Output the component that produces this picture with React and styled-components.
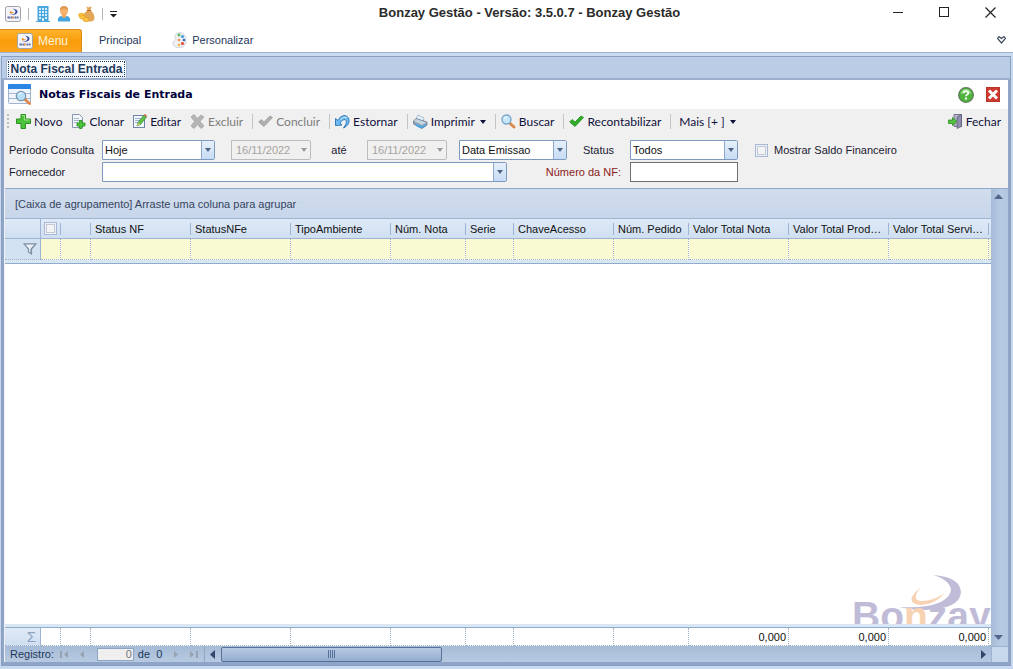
import styled, { createGlobalStyle, css } from "styled-components";

const GlobalStyle = createGlobalStyle`
  * {
    box-sizing: border-box;
  }
  body {
    margin: 0;
    font-family: "Liberation Sans", Arial, sans-serif;
    font-size: 11px;
    color: #1a1a33;
    overflow: hidden;
  }
  button, input, select {
    font: inherit;
    color: inherit;
    margin: 0;
  }
  button {
    padding: 0;
    border: 0;
    background: none;
  }
  svg {
    display: block;
    flex: none;
  }
`;

const Page = styled.div`
  height: 100vh;
  min-height: 400px;
  display: flex;
  flex-direction: column;
  background: #c9d9ef;
`;

const TitleBar = styled.header`
  height: 29px;
  flex: none;
  display: flex;
  align-items: center;
  background: #ffffff;
`;

const QuickAccess = styled.div`
  display: flex;
  align-items: center;
  gap: 7px;
  padding: 0 0 2px 5px;
  width: 184px;
`;

const QuickDivider = styled.span`
  width: 1px;
  height: 12px;
  background: #b4b4b4;
`;

const WindowTitle = styled.h1`
  flex: 1;
  margin: 0;
  padding-bottom: 3px;
  font-size: 13px;
  line-height: 16px;
  font-weight: bold;
  text-align: center;
  color: #2b2b2b;
`;

const WindowButton = styled.button`
  width: 46px;
  height: 29px;
  padding-bottom: 5px;
  display: flex;
  align-items: center;
  justify-content: center;
`;

const Ribbon = styled.nav`
  height: 24px;
  flex: none;
  display: flex;
  align-items: stretch;
  background: #ffffff;
  border-bottom: 1px solid #9fb1cb;
`;

const RibbonTab = styled.button`
  display: flex;
  align-items: center;
  gap: 5px;
  padding: 0 14px 1px 17px;
  color: #1e395b;

  ${({ $menu }) =>
    $menu &&
    css`
      width: 82px;
      padding: 0 0 0 17px;
      color: #fff6dc;
      font-size: 12px;
      border: 1px solid #d98a1b;
      border-left: 0;
      border-bottom: 0;
      border-radius: 0 3px 0 0;
      background: linear-gradient(#fdb32b, #f99d0c 50%, #fba41a);
    `}
`;

const RibbonSpacer = styled.span`
  flex: 1;
`;

const RibbonToggle = styled.button`
  padding: 0 7px 2px 0;
`;

const Frame = styled.main`
  flex: 1;
  min-height: 0;
  margin: 3px 2px 3px 1px;
  display: flex;
  flex-direction: column;
  border: 1px solid #8a9fc1;
`;

const TabStrip = styled.div`
  height: 23px;
  flex: none;
  padding: 2px 0 0 4px;
  background: #bbcce6;
  border-bottom: 2px solid #9cb0cd;
`;

const DocumentTab = styled.button`
  width: 121px;
  height: 19px;
  padding: 1px;
  background: linear-gradient(#ffffff, #edf3fb);
  border: 1px solid #a5b8d4;
  border-radius: 3px 3px 0 0;
  border-bottom: 0;
  color: #1e395b;
  font-size: 12px;
  line-height: 14px;
  font-weight: bold;
  white-space: nowrap;

  span {
    display: block;
    border: 1px dotted #1e395b;
  }
`;

const Document = styled.section`
  flex: 1;
  min-height: 0;
  display: flex;
  flex-direction: column;
  background: #f0f0f0;
  border: solid #8fa5c8;
  border-width: 0 2px 3px;
`;

const FormHeader = styled.div`
  height: 29px;
  flex: none;
  display: flex;
  align-items: center;
  gap: 7px;
  padding: 0 8px 0 4px;
  background: #ffffff;
`;

const FormTitle = styled.h2`
  flex: 1;
  margin: 0;
  font-family: "DejaVu Sans", Verdana, sans-serif;
  font-size: 11px;
  color: #00003c;
`;

const HeaderButtons = styled.div`
  display: flex;
  align-items: center;
  gap: 12px;
`;

const Toolbar = styled.div`
  height: 25px;
  flex: none;
  display: flex;
  align-items: center;
  padding: 0 2px 0 3px;
  font-family: Lato, "Segoe UI", sans-serif;
  font-size: 12px;
`;

const Grip = styled.span`
  width: 2px;
  height: 16px;
  margin-right: 3px;
  background: repeating-linear-gradient(#bdbdbd 0 2px, #f0f0f0 2px 4px);
`;

const ToolButton = styled.button`
  display: flex;
  align-items: center;
  gap: 3px;
  padding: 0 5px 0 ${({ $textOnly }) => ($textOnly ? "7px" : "4px")};
  line-height: 18px;
  color: #10103c;
  white-space: nowrap;
  margin-left: ${({ $end }) => ($end ? "auto" : "0")};

  &:disabled {
    color: #7d7d7d;
  }
`;

const MenuArrow = styled.span`
  padding-left: 2px;
`;

const ToolDivider = styled.span`
  width: 1px;
  height: 15px;
  margin: 0 1px 0 4px;
  background: #c4c4c4;
`;

const Filters = styled.form`
  flex: none;
  padding: 6px 0 6px 5px;
  display: flex;
  flex-direction: column;
  gap: 2px;
`;

const FilterRow = styled.div`
  display: flex;
  align-items: center;
  height: 20px;
`;

const FieldLabel = styled.label`
  width: ${({ $width }) => $width}px;
  padding-right: ${({ $end }) => ($end ? "9px" : "0")};
  text-align: ${({ $end, $center }) =>
    $end ? "right" : $center ? "center" : "left"};
  color: ${({ $required }) => ($required ? "#8b1a1a" : "#1a1a33")};
  font-size: 11px;
`;

const SelectBox = styled.div`
  width: ${({ $width }) => $width}px;
  height: 20px;
  margin-right: ${({ $gap }) => $gap || 0}px;
  display: grid;
  align-items: stretch;
  border: 1px solid #7f9ac0;
  border-radius: 0 2px 2px 0;
  background: #ffffff;

  select {
    grid-area: 1 / 1;
    width: 100%;
    padding: 0 20px 0 2px;
    appearance: none;
    border: 0;
    background: transparent;
    color: #111111;
  }

  ${({ $muted }) =>
    $muted &&
    css`
      background: #f0f0f0;
      border-color: #bcbcbc;

      select {
        padding-left: 4px;
        color: #a6a39d;
        opacity: 1;
      }
    `}
`;

const SelectArrow = styled.span`
  grid-area: 1 / 1;
  justify-self: end;
  width: 13px;
  display: flex;
  align-items: center;
  justify-content: center;
  pointer-events: none;
  color: ${({ $muted }) => ($muted ? "#9a9a9a" : "#4e6485")};
  background: ${({ $muted }) =>
    $muted ? "transparent" : "linear-gradient(#e6f0fb, #c6dbf3)"};
  border-left: ${({ $muted }) => ($muted ? "0" : "1px solid #8fa9ce")};
`;

const NumberInput = styled.input`
  width: 108px;
  height: 20px;
  padding: 0 3px;
  border: 1px solid #6e6e6e;
  border-radius: 0;
  background: #ffffff;
`;

const CheckLabel = styled.label`
  display: flex;
  align-items: center;
  gap: 6px;
  margin-left: 17px;
`;

const Check = styled.input.attrs({ type: "checkbox" })`
  appearance: none;
  display: block;
  width: 13px;
  height: 13px;
  border: 1px solid #a9b9d3;
  background: #f4f4f4;
  box-shadow: inset 0 0 0 1px #eef2f8, inset 0 0 0 2px #c3cad6;
`;

const GridPanel = styled.div`
  flex: 1;
  min-height: 0;
  margin-left: 1px;
  display: flex;
  flex-direction: column;
  border-top: 1px solid #8fa9cc;
  background: #ffffff;
`;

const GridTop = styled.div`
  flex: 1;
  min-height: 0;
  display: flex;
`;

const GridMain = styled.div`
  flex: 1;
  min-width: 0;
  display: flex;
  flex-direction: column;
  overflow: hidden;
`;

const GroupBox = styled.div`
  height: 30px;
  flex: none;
  padding-left: 10px;
  line-height: 30px;
  color: #35445f;
  background: linear-gradient(#d1dded, #c8d6ea);
  border-bottom: 1px solid #9fb4d2;
`;

const TableArea = styled.div`
  flex: 1;
  min-height: 0;
  overflow: hidden;
`;

const DataTable = styled.table`
  width: 100%;
  height: 100%;
  table-layout: fixed;
  border-collapse: separate;
  border-spacing: 0;
`;

const HeaderRow = styled.tr`
  height: 20px;

  th {
    padding: 0 4px;
    height: 20px;
    font-weight: normal;
    text-align: left;
    white-space: nowrap;
    overflow: hidden;
    text-overflow: ellipsis;
    color: #111111;
    border-bottom: 1px solid #9fb4d2;
    background: linear-gradient(#9fb4d2, #9fb4d2) right 0 top 4px / 1px 12px
        no-repeat,
      linear-gradient(#dfeaf7, #cfdff1);
  }

  th:first-child {
    background: linear-gradient(#dfeaf7, #cfdff1);
    border-right: 1px solid #9fb4d2;
  }

  th:nth-child(2) {
    padding: 0 0 0 3px;
  }

  th:last-child {
    background: linear-gradient(#dfeaf7, #cfdff1);
  }
`;

const FilterCells = styled.tr`
  height: 21px;

  td {
    height: 21px;
    padding: 0;
    background: #f9f9d2;
    border-right: 1px dotted #9fb4c8;
    border-bottom: 1px dotted #9fb4c8;
    background-clip: padding-box;
  }

  td:first-child {
    padding-left: 18px;
    background: #d3e2f3;
    border-right: 1px solid #9fb4d2;
  }

  td:last-child {
    border-right: 0;
  }
`;

const BandRow = styled.tr`
  height: 4px;

  td {
    height: 4px;
    padding: 0;
    background: #d9e6f4;
    border-bottom: 1px solid #93abca;
  }
`;

const EmptyBody = styled.td`
  padding: 0;
  vertical-align: bottom;
  background: #ffffff;

  svg {
    margin-left: auto;
  }
`;

const TotalsRow = styled.tr`
  height: 18px;

  td {
    height: 18px;
    padding: 0 2px 0 0;
    text-align: right;
    color: #111111;
    background: #ffffff;
    border-right: 1px dotted #9fb4c8;
    border-bottom: 1px dotted #9fb4c8;
  }

  td:first-child {
    font-size: 15px;
    line-height: 15px;
    padding-right: 4px;
    color: #8fa3c0;
    background: linear-gradient(#dfeaf7, #cfdff1);
    border-right: 1px solid #9fb4d2;
  }

  td:last-child {
    border-right: 0;
  }
`;

const VerticalBar = styled.div`
  width: 17px;
  flex: none;
  display: flex;
  flex-direction: column;
  justify-content: space-between;
  align-items: center;
  padding: 5px 2px 6px 0;
  color: #52658a;
  background: linear-gradient(90deg, #a6bbd8, #b8cbe4 60%, #b3c7e1);
`;

const GridBottom = styled.div`
  height: 16px;
  flex: none;
  display: flex;
  background: linear-gradient(#a5bbd6, #b8cae2);
`;

const Navigator = styled.div`
  width: 200px;
  flex: none;
  display: flex;
  align-items: center;
  padding-left: 5px;
  border-right: 1px solid #8fa5c4;
  color: #1e395b;

  label {
    width: 45px;
  }
`;

const NavButton = styled.button`
  width: 20px;
  display: flex;
  justify-content: center;
  color: #98a3b2;
`;

const RecordInput = styled.input`
  width: 37px;
  height: 13px;
  padding: 0 1px;
  text-align: right;
  color: #777777;
  background: #efefef;
  border: 1px solid #8fa5c4;
  margin: 0 4px 0 5px;
`;

const RecordCount = styled.span`
  width: 30px;
  white-space: pre;
`;

const HorizontalBar = styled.div`
  flex: 1;
  display: flex;
  align-items: center;
  padding: 0 5px;
  color: #33456b;
`;

const HorizontalThumb = styled.div`
  width: 221px;
  height: 15px;
  margin: 0 auto 0 6px;
  display: flex;
  align-items: center;
  justify-content: center;
  border: 1px solid #58719a;
  border-radius: 2px;
  background: linear-gradient(#b7cae5, #94adcd);
`;

const Corner = styled.div`
  width: 17px;
  border: solid #9fb4d2;
  border-width: 1px 0 0 1px;
  background: #c8d8ec;
`;

/* icons */

const AppIcon = () => (
  <svg width="16" height="16" viewBox="0 0 16 16">
    <rect x="0.5" y="0.5" width="15" height="15" rx="2" fill="#f3f4f8" stroke="#a2a2ab" />
    <path d="M7 2.500q6 .500 5.500 3.500Q12 9.500 4 9q6-.500 6.500-3Q10.500 3.500 7 2.500z" fill="#34469a" />
    <path d="M6 4.500q-2.500 2.500-.500 3 2 .300 4-1.200-3.500.700-3.500-1.800z" fill="#ef8a2c" />
    <path d="M2.500 11.500h3m.500 0h1.500m2 0H11m.500 0h2" stroke="#6470aa" strokeWidth="2" />
    <path d="M7 11.500h2" stroke="#e19a5c" strokeWidth="2" />
  </svg>
);

const BuildingIcon = () => (
  <svg width="14" height="16" viewBox="0 0 14 16">
    <path d="M1.500 0h11v15H14v1H0v-1h1.500z" fill="#4ba6dd" />
    <path
      d="M3 2h2v2H3zm3 0h2v2H6zm3 0h2v2H9zM3 5h2v2H3zm3 0h2v2H6zm3 0h2v2H9zM3 8h2v2H3zm3 0h2v2H6zm3 0h2v2H9zM3 11h2v2H3zm6 0h2v2H9zM6 12h2v3H6z"
      fill="#d3efff"
    />
  </svg>
);

const UserIcon = () => (
  <svg width="14" height="16" viewBox="0 0 14 16">
    <path d="M1 15.500Q0 11 4 10l3 1 3-1q4 1 3 5.500z" fill="#43a5e0" />
    <path d="M5 8h4v3q-2 2-4 0z" fill="#eda45c" />
    <ellipse cx="7" cy="5" rx="4" ry="4.700" fill="#f6b26e" />
    <path d="M3 5Q2.500 0 7 0t4 5Q9.500 2.500 7 2.500T3 5z" fill="#e09a50" />
  </svg>
);

const MoneyIcon = () => (
  <svg width="17" height="16" viewBox="0 0 17 16">
    <path d="M9.500 4L8.500.500l2 1 2-1.300 1 1.300L12.500 4q4 4 4 8-.500 3.500-4 3.500H7q-3-1-2-5.500 1-3 4.500-6z" fill="#e3a557" />
    <path d="M9 4.500h4" stroke="#aa6e2e" />
    <g fill="#ffc744" stroke="#dc9b20" strokeWidth=".7">
      <ellipse cx="3.500" cy="9" rx="3" ry="1.700" />
      <ellipse cx="4.500" cy="11.300" rx="3" ry="1.700" />
      <ellipse cx="8" cy="13.500" rx="3" ry="2" />
    </g>
  </svg>
);

const CustomizeMenuIcon = () => (
  <svg width="7" height="8" viewBox="0 0 7 8">
    <path d="M0 1.500h7" stroke="#222" />
    <path d="M0 4h7L3.500 7.500z" fill="#222" />
  </svg>
);

const PaletteIcon = () => (
  <svg width="15" height="16" viewBox="0 0 15 16">
    <path
      d="M8 .500q6 1 6 8 0 6-5 7-6 1-8-3-1-3 2-4 2-1 0-3-1-4 5-5z"
      fill="#eef0f4"
      stroke="#d3d6dd"
    />
    <circle cx="7" cy="3" r="1.400" fill="#57b957" />
    <circle cx="10.500" cy="4.500" r="1.500" fill="#3d9ad9" />
    <circle cx="12" cy="8" r="1.300" fill="#3366bb" />
    <circle cx="10.500" cy="11.500" r="1.600" fill="#e24c3a" />
    <circle cx="7" cy="13" r="1.300" fill="#f0b83a" />
    <circle cx="7" cy="8" r="1.300" fill="#e5985a" />
  </svg>
);

const MinimizeIcon = () => (
  <svg width="10" height="10" viewBox="0 0 10 10">
    <path d="M0 5.500h10" stroke="#222" />
  </svg>
);

const MaximizeIcon = () => (
  <svg width="10" height="10" viewBox="0 0 10 10">
    <rect x="0.500" y="0.500" width="9" height="9" fill="none" stroke="#222" />
  </svg>
);

const CloseIcon = () => (
  <svg width="11" height="11" viewBox="0 0 11 11">
    <path d="M.500.500l10 10m0-10l-10 10" stroke="#222" strokeWidth="1.200" />
  </svg>
);

const ExpandIcon = () => (
  <svg width="9" height="8" viewBox="0 0 9 8">
    <path
      d="M.500 2.500l1.500-2 2.500 2 2.500-2 1.500 2-4 4.500z"
      fill="none"
      stroke="#3d4a5e"
      strokeWidth="1.200"
    />
  </svg>
);

const FormIcon = () => (
  <svg width="24" height="22" viewBox="0 0 24 22">
    <rect x="0.500" y="0.500" width="22" height="19" rx="1" fill="#f1f5fb" stroke="#9fb3cf" />
    <path d="M0 1q0-1 1-1h21q1 0 1 1v4H0z" fill="#2a86e2" />
    <path d="M1 9.500h21M1 14.500h21" stroke="#a9b8d0" />
    <path d="M16.500 15l5 4.500" stroke="#e08a4e" strokeWidth="3" strokeLinecap="round" />
    <circle cx="13" cy="12" r="4.700" fill="#b5e0f7" stroke="#7893ad" strokeWidth="1.200" />
    <path d="M10.500 11q1-2.500 3.500-2" stroke="#fff" fill="none" />
  </svg>
);

const HelpIcon = () => (
  <svg width="16" height="16" viewBox="0 0 16 16">
    <circle cx="8" cy="8" r="7.300" fill="#4fb53c" stroke="#5c7a58" strokeWidth="1.300" />
    <path d="M2.500 7q1-5 5.500-5t5.500 5q-5-2-11 0z" fill="#8bd97b" />
    <path d="M5.700 6.200q0-2.200 2.300-2.200t2.300 2q0 1.200-1.300 1.800-1 .500-1 1.500" stroke="#fff" strokeWidth="1.700" fill="none" />
    <rect x="7" y="10.500" width="2" height="2" fill="#fff" />
  </svg>
);

const FormCloseIcon = () => (
  <svg width="14" height="15" viewBox="0 0 14 15">
    <rect x="0.500" y="0.500" width="13" height="14" fill="#d0392e" stroke="#b5342c" />
    <path d="M3 3.500l8 8m0-8l-8 8" stroke="#fff" strokeWidth="3" />
  </svg>
);

const PlusIcon = () => (
  <svg width="15" height="15" viewBox="0 0 15 15">
    <path d="M5 .500h4.500v4.500H14.500v4.500H9.500v5H5v-5H.500V5H5z" fill="#4cc43a" stroke="#2d8f22" />
    <path d="M6 1.500h2.500V6H13.500" fill="none" stroke="#9be58e" />
  </svg>
);

const CloneIcon = () => (
  <svg width="15" height="15" viewBox="0 0 15 15">
    <path d="M1.500.500h7l3 3v10h-10z" fill="#f3f6fa" stroke="#8795ad" />
    <path d="M3 4.500h5M3 6.500h6M3 8.500h4" stroke="#a5b4c9" />
    <path d="M8.500 6.500h2.500v2.500h3V12h-3v2.500H8.500V12H6V9h2.500z" fill="#4cc43a" stroke="#238a1a" strokeWidth=".8" />
  </svg>
);

const EditIcon = () => (
  <svg width="14" height="15" viewBox="0 0 14 15">
    <rect x="0.500" y="1.500" width="11" height="12" fill="#f5f8fc" stroke="#6f86aa" />
    <path d="M2 4.500h6M2 6.500h5M2 8.500h3" stroke="#9fb4d2" />
    <path d="M4 12l1-3.500L11 1l2.500 2-6 7.500z" fill="#5fc24b" stroke="#34862a" strokeWidth=".7" />
    <path d="M11 1l1-1 2 2-1 1z" fill="#e0564a" />
    <path d="M4 12l1-3 2 1.500z" fill="#f0cf92" />
  </svg>
);

const DeleteIcon = () => (
  <svg width="15" height="15" viewBox="0 0 15 15">
    <path d="M1 3l3-2.500 3.500 4L11 1l3 2-4 4.500 4 4.500-3 2.500-3.500-4L4 14.500 1 12l3.500-4.500z" fill="#b5b5b5" stroke="#9d9d9d" strokeWidth=".7" />
  </svg>
);

const CheckIcon = ({ color, edge }) => (
  <svg width="15" height="15" viewBox="0 0 15 15">
    <path d="M.700 8l2.500-2.500L6 8 12 2l2.500 1.500L6 12.500z" fill={color} stroke={edge} strokeWidth=".8" />
  </svg>
);

const UndoIcon = () => (
  <svg width="15" height="15" viewBox="0 0 15 15">
    <path d="M.500 4.500v7l6.500-.500-2-2q2-4 5-3.500 3.500 2-1.500 8.500 6-3 5.500-8Q13 1.500 9 1.500 5 2 3 6.500z" fill="#6dbcf2" stroke="#256fb5" strokeWidth=".9" />
    <path d="M5.500 5.500q3-3.500 6.500-2" stroke="#d3ecfc" fill="none" />
  </svg>
);

const PrintIcon = () => (
  <svg width="15" height="15" viewBox="0 0 15 15">
    <path d="M3 5l2-4 6 3-1 4z" fill="#e3f2fc" stroke="#91a5b7" strokeWidth=".7" />
    <path d="M.500 7L3 4.500 14 8v3l-5 3.500L.500 10z" fill="#8da3b8" stroke="#5d7183" strokeWidth=".7" />
    <path d="M1 7l2-2 10.500 3.500L9 11z" fill="#c6d4e0" />
    <path d="M3 10l6 2.500 3-2 1 1.500-5 2.500-5-2.500z" fill="#45a8e5" />
  </svg>
);

const SearchIcon = () => (
  <svg width="15" height="15" viewBox="0 0 15 15">
    <path d="M8.500 9l4.500 4" stroke="#d98948" strokeWidth="3" strokeLinecap="round" />
    <circle cx="5.500" cy="5.500" r="4.500" fill="#c6e8fb" stroke="#7aa6cc" strokeWidth="1.400" />
    <path d="M3 5q.500-2 3-2.200" stroke="#fff" fill="none" />
  </svg>
);

const ExitIcon = () => (
  <svg width="15" height="15" viewBox="0 0 15 15">
    <path d="M6 .500h7.500v12H6z" fill="#b9b8cc" stroke="#76758f" />
    <path d="M9 3l4.500-2.500v12L9 14.500z" fill="#8d8caa" stroke="#5c5b78" strokeWidth=".7" />
    <path d="M.500 6h4V3.500L9 7.500l-4.500 4V9.500h-4z" fill="#54c243" stroke="#2c8a20" strokeWidth=".8" />
  </svg>
);

const FunnelIcon = () => (
  <svg width="14" height="12" viewBox="0 0 14 12">
    <path d="M1 .800h12L8.500 6v5L5.500 9V6z" fill="#e8eff8" stroke="#7f8ea4" strokeWidth="1.200" />
    <path d="M12 1.500L8 6v4" stroke="#7f8ea4" fill="none" />
  </svg>
);

const TRIANGLES = {
  down: "M0 0h10L5 6z",
  up: "M0 6h10L5 0z",
  left: "M10 0v6L0 3z",
  right: "M0 0v6l10-3z",
};

const Triangle = ({ dir = "down", width = 6, height = 4 }) => (
  <svg width={width} height={height} viewBox="0 0 10 6" preserveAspectRatio="none">
    <path d={TRIANGLES[dir]} fill="currentColor" />
  </svg>
);

const EndIcon = ({ last }) => (
  <svg width="9" height="7" viewBox="0 0 9 7">
    <path
      d={last ? "M0 0v7l4-3.500zM6 0h2v7H6z" : "M9 0v7L5 3.500zM1 0h2v7H1z"}
      fill="currentColor"
    />
  </svg>
);

const ThumbGrip = () => (
  <svg width="8" height="8" viewBox="0 0 8 8">
    <path d="M.500 0v8m2-8v8m2-8v8m2-8v8" stroke="#58719a" />
  </svg>
);

const Watermark = () => (
  <svg width="138" height="50" viewBox="0 0 138 50">
    <path d="M80 1Q107 3 108 18 107 35 72 36 58 36 46 33 62 34 74 32 96 28 98 16 97 6 80 1z" fill="#c0bcd8" />
    <path d="M68 13Q58 25 67 27 78 28 92 19 80 32 66 31 50 28 68 13z" fill="#f8d3b3" />
    <text x="-1" y="55" fontFamily="Liberation Sans, Arial, sans-serif" fontSize="39" fontWeight="bold" fill="#c0bcd8">
      Bo<tspan fill="#f8d3b3">n</tspan>zay
    </text>
  </svg>
);

const columns = [
  { width: 36 },
  { width: 20, check: true },
  { width: 30 },
  { width: 100, label: "Status NF" },
  { width: 100, label: "StatusNFe" },
  { width: 100, label: "TipoAmbiente" },
  { width: 75, label: "Núm. Nota" },
  { width: 48, label: "Serie" },
  { width: 100, label: "ChaveAcesso" },
  { width: 75, label: "Núm. Pedido" },
  { width: 100, label: "Valor Total Nota", total: "0,000" },
  { width: 100, label: "Valor Total Produtos", total: "0,000" },
  { width: 100, label: "Valor Total Serviços", total: "0,000" },
  {},
];

const Select = ({ id, width, gap, value, muted, label }) => (
  <SelectBox $width={width} $gap={gap} $muted={muted}>
    <select id={id} disabled={muted} aria-label={label}>
      <option>{value}</option>
    </select>
    <SelectArrow $muted={muted}>
      <Triangle width={6} height={4} />
    </SelectArrow>
  </SelectBox>
);

const InvoiceGrid = () => (
  <GridPanel>
    <GridTop>
      <GridMain>
        <GroupBox>[Caixa de agrupamento] Arraste uma coluna para agrupar</GroupBox>
        <TableArea>
          <DataTable>
            <colgroup>
              {columns.map((col, i) => (
                <col key={i} width={col.width} />
              ))}
            </colgroup>
            <thead>
              <HeaderRow>
                {columns.map((col, i) => (
                  <th key={i}>
                    {col.check ? <Check aria-label="Selecionar todos" /> : col.label}
                  </th>
                ))}
              </HeaderRow>
              <FilterCells>
                {columns.map((col, i) => (
                  <td key={i}>{i === 0 && <FunnelIcon />}</td>
                ))}
              </FilterCells>
              <BandRow>
                <td colSpan={columns.length} />
              </BandRow>
            </thead>
            <tbody>
              <tr>
                <EmptyBody colSpan={columns.length}>
                  <Watermark />
                </EmptyBody>
              </tr>
            </tbody>
            <tfoot>
              <BandRow>
                <td colSpan={columns.length} />
              </BandRow>
              <TotalsRow>
                {columns.map((col, i) => (
                  <td key={i}>{i === 0 ? "Σ" : col.total}</td>
                ))}
              </TotalsRow>
            </tfoot>
          </DataTable>
        </TableArea>
      </GridMain>
      <VerticalBar>
        <Triangle dir="up" width={9} height={5} />
        <Triangle width={9} height={5} />
      </VerticalBar>
    </GridTop>
    <GridBottom>
      <Navigator>
        <label htmlFor="record">Registro:</label>
        <NavButton aria-label="Primeiro">
          <EndIcon />
        </NavButton>
        <NavButton aria-label="Anterior">
          <Triangle dir="left" width={4} height={7} />
        </NavButton>
        <RecordInput id="record" defaultValue="0" />
        <RecordCount>{"de  0"}</RecordCount>
        <NavButton aria-label="Próximo">
          <Triangle dir="right" width={4} height={7} />
        </NavButton>
        <NavButton aria-label="Último">
          <EndIcon last />
        </NavButton>
      </Navigator>
      <HorizontalBar>
        <Triangle dir="left" width={5} height={9} />
        <HorizontalThumb>
          <ThumbGrip />
        </HorizontalThumb>
        <Triangle dir="right" width={5} height={9} />
      </HorizontalBar>
      <Corner />
    </GridBottom>
  </GridPanel>
);

const App = () => {
  return (
    <Page>
      <GlobalStyle />
      <TitleBar>
        <QuickAccess>
          <AppIcon />
          <QuickDivider />
          <BuildingIcon />
          <UserIcon />
          <MoneyIcon />
          <QuickDivider />
          <CustomizeMenuIcon />
        </QuickAccess>
        <WindowTitle>Bonzay Gestão - Versão: 3.5.0.7 - Bonzay Gestão</WindowTitle>
        <WindowButton aria-label="Minimizar">
          <MinimizeIcon />
        </WindowButton>
        <WindowButton aria-label="Maximizar">
          <MaximizeIcon />
        </WindowButton>
        <WindowButton aria-label="Fechar janela">
          <CloseIcon />
        </WindowButton>
      </TitleBar>
      <Ribbon>
        <RibbonTab $menu>
          <AppIcon />
          Menu
        </RibbonTab>
        <RibbonTab>Principal</RibbonTab>
        <RibbonTab>
          <PaletteIcon />
          Personalizar
        </RibbonTab>
        <RibbonSpacer />
        <RibbonToggle aria-label="Expandir">
          <ExpandIcon />
        </RibbonToggle>
      </Ribbon>
      <Frame>
        <TabStrip>
          <DocumentTab>
            <span>Nota Fiscal Entrada</span>
          </DocumentTab>
        </TabStrip>
        <Document>
          <FormHeader>
            <FormIcon />
            <FormTitle>Notas Fiscais de Entrada</FormTitle>
            <HeaderButtons>
              <button aria-label="Ajuda">
                <HelpIcon />
              </button>
              <button aria-label="Fechar formulário">
                <FormCloseIcon />
              </button>
            </HeaderButtons>
          </FormHeader>
          <Toolbar>
            <Grip />
            <ToolButton>
              <PlusIcon />
              Novo
            </ToolButton>
            <ToolButton>
              <CloneIcon />
              Clonar
            </ToolButton>
            <ToolButton>
              <EditIcon />
              Editar
            </ToolButton>
            <ToolButton disabled>
              <DeleteIcon />
              Excluir
            </ToolButton>
            <ToolDivider />
            <ToolButton disabled>
              <CheckIcon color="#b0b0b0" edge="#999999" />
              Concluir
            </ToolButton>
            <ToolDivider />
            <ToolButton>
              <UndoIcon />
              Estornar
            </ToolButton>
            <ToolDivider />
            <ToolButton>
              <PrintIcon />
              Imprimir
              <MenuArrow>
                <Triangle width={6} height={4} />
              </MenuArrow>
            </ToolButton>
            <ToolDivider />
            <ToolButton>
              <SearchIcon />
              Buscar
            </ToolButton>
            <ToolDivider />
            <ToolButton>
              <CheckIcon color="#2fae2a" edge="#1d8a1a" />
              Recontabilizar
            </ToolButton>
            <ToolDivider />
            <ToolButton $textOnly>
              Mais [+ ]
              <MenuArrow>
                <Triangle width={6} height={4} />
              </MenuArrow>
            </ToolButton>
            <ToolButton $end>
              <ExitIcon />
              Fechar
            </ToolButton>
          </Toolbar>
          <Filters>
            <FilterRow>
              <FieldLabel $width={93} htmlFor="period">
                Período Consulta
              </FieldLabel>
              <Select id="period" width={113} gap={16} value="Hoje" />
              <Select width={80} value="16/11/2022" muted label="Data inicial" />
              <FieldLabel $width={56} $center htmlFor="until">
                até
              </FieldLabel>
              <Select id="until" width={80} gap={12} value="16/11/2022" muted />
              <Select width={108} value="Data Emissao" label="Tipo de data" />
              <FieldLabel $width={63} $center htmlFor="status">
                Status
              </FieldLabel>
              <Select id="status" width={108} value="Todos" />
              <CheckLabel>
                <Check />
                Mostrar Saldo Financeiro
              </CheckLabel>
            </FilterRow>
            <FilterRow>
              <FieldLabel $width={93} htmlFor="supplier">
                Fornecedor
              </FieldLabel>
              <Select id="supplier" width={405} value="" />
              <FieldLabel $width={123} $end $required htmlFor="number">
                Número da NF:
              </FieldLabel>
              <NumberInput id="number" />
            </FilterRow>
          </Filters>
          <InvoiceGrid />
        </Document>
      </Frame>
    </Page>
  );
};

export default App;
